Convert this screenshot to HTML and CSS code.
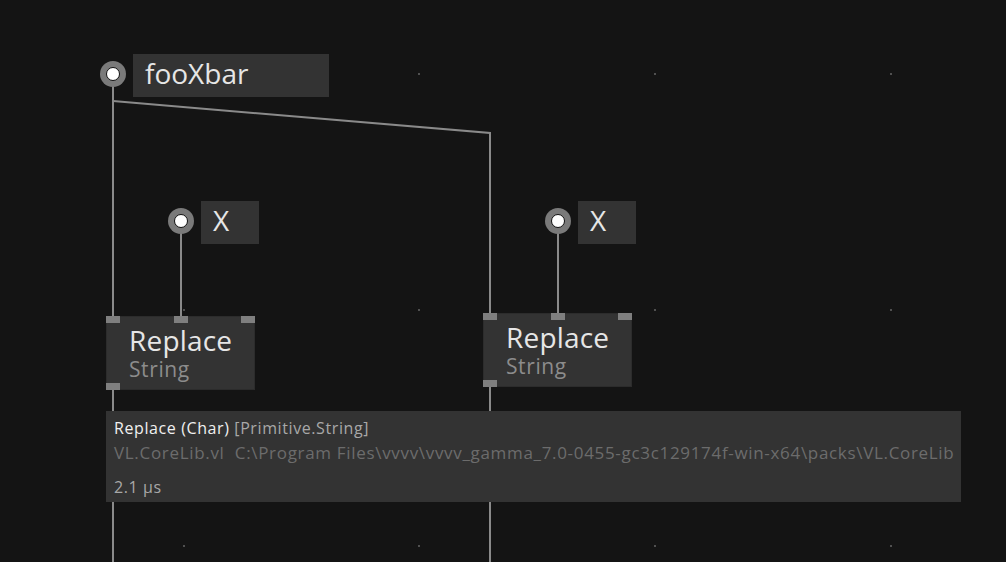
FILE: index.html
```html
<!DOCTYPE html>
<html>
<head>
<meta charset="utf-8">
<link rel="stylesheet" href="styles.css">
</head>
<body>
<div class="patch">
  <svg class="layer" width="1006" height="562" viewBox="0 0 1006 562">
    <g class="grid">
      <rect x="183" y="73" width="2" height="2"/><rect x="418" y="73" width="2" height="2"/><rect x="654" y="73" width="2" height="2"/><rect x="890" y="73" width="2" height="2"/>
      <rect x="183" y="309" width="2" height="2"/><rect x="418" y="309" width="2" height="2"/><rect x="654" y="309" width="2" height="2"/><rect x="890" y="309" width="2" height="2"/>
      <rect x="183" y="545" width="2" height="2"/><rect x="418" y="545" width="2" height="2"/><rect x="654" y="545" width="2" height="2"/><rect x="890" y="545" width="2" height="2"/>
    </g>
    <g class="links">
      <path d="M113 80 V562"/>
      <path d="M113 101 L490 133 V562"/>
      <path d="M181 228 V318"/>
      <path d="M558 228 V315"/>
    </g>
  </svg>

  <div class="iobox" style="left:100px;top:54px">
    <span class="pin"></span>
    <span class="value wide">fooXbar</span>
  </div>
  <div class="iobox" style="left:168px;top:201px">
    <span class="pin"></span>
    <span class="value">X</span>
  </div>
  <div class="iobox" style="left:545px;top:201px">
    <span class="pin"></span>
    <span class="value">X</span>
  </div>

  <div class="node" style="left:106px;top:316px">
    <div class="inlets"><i></i><i></i><i></i></div>
    <div class="name">Replace</div>
    <div class="category">String</div>
    <div class="outlets"><i></i></div>
  </div>
  <div class="node" style="left:483px;top:313px">
    <div class="inlets"><i></i><i></i><i></i></div>
    <div class="name">Replace</div>
    <div class="category">String</div>
    <div class="outlets"><i></i></div>
  </div>

  <div class="tooltip" style="left:106px;top:411px">
    <div class="title">Replace (Char) <span class="ns">[Primitive.String]</span></div>
    <div class="path">VL.CoreLib.vl&nbsp;&nbsp;C:\Program Files\vvvv\vvvv_gamma_7.0-0455-gc3c129174f-win-x64\packs\VL.CoreLib</div>
    <div class="timing">2.1 µs</div>
  </div>
</div>
</body>
</html>
```

FILE: styles.css
```css
html, body {
  margin: 0;
  padding: 0;
  background: #141414;
  overflow: hidden;
}

.patch {
  position: relative;
  width: 1006px;
  height: 562px;
  font-family: "Open Sans", "DejaVu Sans", sans-serif;
}

.layer {
  position: absolute;
  left: 0;
  top: 0;
}

.grid rect {
  fill: #505050;
}

.links path {
  fill: none;
  stroke: #8a8a8a;
  stroke-width: 2;
}

/* IO boxes: a round pin followed by the value field */
.iobox {
  position: absolute;
  display: flex;
  align-items: flex-start;
}

.pin {
  box-sizing: border-box;
  width: 26px;
  height: 26px;
  margin-top: 7px;
  border-radius: 50%;
  background: #7a7a7a;
  display: flex;
  align-items: center;
  justify-content: center;
}

.pin::after {
  content: "";
  box-sizing: border-box;
  width: 14px;
  height: 14px;
  border-radius: 50%;
  background: #fff;
  border: 1.5px solid #111;
}

.value {
  margin-left: 7px;
  width: 58px;
  height: 43px;
  background: #333;
  color: #e6e6e6;
  font-size: 28px;
  line-height: 38px;
  padding-left: 12px;
  box-sizing: border-box;
}

.value.wide {
  width: 196px;
}

/* Node */
.node {
  position: absolute;
  width: 149px;
  height: 74px;
  background: #333;
  box-shadow: inset 0 0 0 1px #2c2c2c;
  box-sizing: border-box;
  padding-left: 23px;
}

.inlets, .outlets {
  position: absolute;
  left: 0;
  right: 0;
  display: flex;
  justify-content: space-between;
}

.inlets { top: 0; }
.outlets { bottom: 0; }

.inlets i, .outlets i {
  display: block;
  width: 14px;
  height: 7px;
  background: #7f7f7f;
}

.name {
  margin-top: 6px;
  font-size: 28px;
  line-height: 36px;
  letter-spacing: 0.2px;
  color: #e6e6e6;
}

.category {
  font-size: 21px;
  line-height: 22px;
  letter-spacing: 0.6px;
  color: #8c8c8c;
}

/* Tooltip */
.tooltip {
  position: absolute;
  width: 855px;
  height: 91px;
  background: #333;
  padding: 7px 0 0 8px;
  box-sizing: border-box;
  font-size: 16px;
  letter-spacing: 0.6px;
}

.title {
  color: #f0f0f0;
  line-height: 20px;
}

.title .ns {
  color: #a8a8a8;
}

.path {
  margin-top: 5px;
  color: #6c6c6c;
  font-size: 17px;
  line-height: 20px;
  letter-spacing: 0.68px;
  white-space: nowrap;
}

.timing {
  margin-top: 14px;
  color: #a8a8a8;
  line-height: 20px;
}
```
